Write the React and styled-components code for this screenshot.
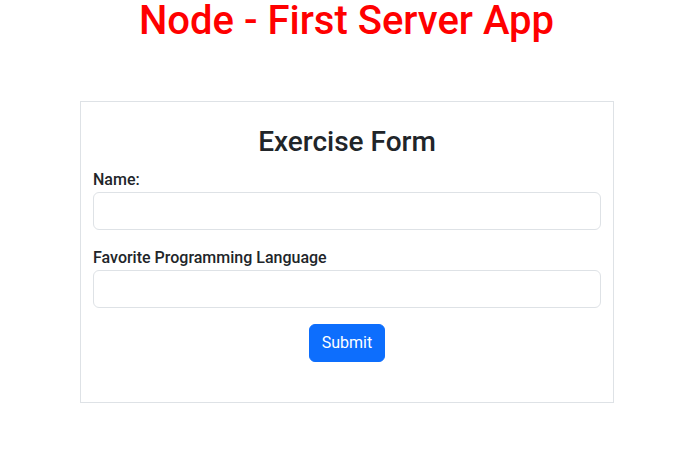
import React from 'react';
import styled, {createGlobalStyle} from "styled-components";

const GlobalStyle = createGlobalStyle`
  * {
    box-sizing: border-box;
  }

  body {
    margin: 0;
    background: #ffffff;
    font-family: Roboto, "Liberation Sans", sans-serif;
    color: #212529;
  }
`;

const Page = styled.div`
  width: 690px;
  min-height: 471px;
  display: flex;
  flex-direction: column;
`;

const Title = styled.h1`
  margin: 0;
  padding-left: 3px;
  font-size: 40px;
  line-height: 42px;
  font-weight: 500;
  color: #ff0000;
  text-align: center;
`;

const Card = styled.form`
  margin: 59px 0 0 80px;
  width: 534px;
  border: 1px solid #dee2e6;
  padding: 23px 12px 40px;
  display: flex;
  flex-direction: column;
`;

const FormTitle = styled.h2`
  margin: 0 0 9px;
  font-size: 28px;
  line-height: 1.2;
  font-weight: 500;
  text-align: center;
`;

const Field = styled.div`
  display: flex;
  flex-direction: column;
  margin-bottom: 16px;
`;

const Label = styled.label`
  font-size: 16px;
  line-height: 24px;
  font-weight: 500;
`;

const Input = styled.input`
  height: 38px;
  width: 100%;
  border: 1px solid #dee2e6;
  border-radius: 6px;
  padding: 6px 12px;
  font-family: inherit;
  font-size: 16px;
  color: #212529;
  outline: none;
`;

const Actions = styled.div`
  display: flex;
  justify-content: center;
`;

const SubmitButton = styled.button`
  height: 38px;
  padding: 6px 12px;
  border: 1px solid #0d6efd;
  border-radius: 6px;
  background: #0d6efd;
  color: #ffffff;
  font-family: inherit;
  font-size: 16px;
  line-height: 24px;
  cursor: pointer;
`;

const App = () => {

    return (
        <Page>
            <GlobalStyle/>
            <Title>Node - First Server App</Title>
            <Card onSubmit={e => e.preventDefault()}>
                <FormTitle>Exercise Form</FormTitle>
                <Field>
                    <Label htmlFor="name">Name:</Label>
                    <Input id="name" type="text"/>
                </Field>
                <Field>
                    <Label htmlFor="language">Favorite Programming Language</Label>
                    <Input id="language" type="text"/>
                </Field>
                <Actions>
                    <SubmitButton type="submit">Submit</SubmitButton>
                </Actions>
            </Card>
        </Page>
    );
};

export default App;
